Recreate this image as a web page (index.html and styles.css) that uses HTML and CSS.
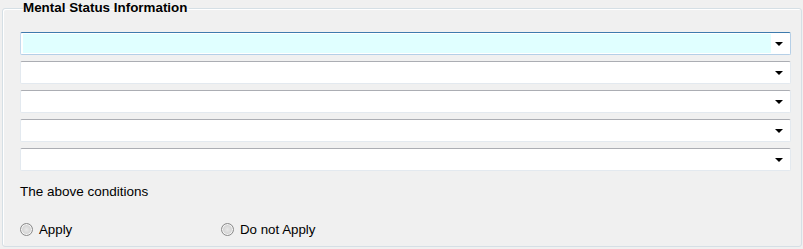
FILE: index.html
```html
<!DOCTYPE html>
<html>
<head>
<meta charset="utf-8">
<link rel="stylesheet" href="styles.css">
</head>
<body>
<fieldset class="group">
  <legend class="group-title">Mental Status Information</legend>
  <div class="combos">
    <div class="combo combo-focus"><span class="combo-field"></span><span class="combo-arrow"></span></div>
    <div class="combo"><span class="combo-field"></span><span class="combo-arrow"></span></div>
    <div class="combo"><span class="combo-field"></span><span class="combo-arrow"></span></div>
    <div class="combo"><span class="combo-field"></span><span class="combo-arrow"></span></div>
    <div class="combo"><span class="combo-field"></span><span class="combo-arrow"></span></div>
  </div>
  <div class="caption">The above conditions</div>
  <div class="radios">
    <label class="radio"><span class="radio-dot"></span><span class="radio-text">Apply</span></label>
    <label class="radio"><span class="radio-dot"></span><span class="radio-text">Do not Apply</span></label>
  </div>
</fieldset>
</body>
</html>
```
FILE: styles.css
```css
html, body {
  margin: 0;
  padding: 0;
  background: #f0f0f0;
}
body {
  width: 803px;
  height: 249px;
  overflow: hidden;
  font-family: "Liberation Sans", Arial, sans-serif;
  color: #000;
}
.group {
  box-sizing: border-box;
  margin: 0 1px 0 2px;
  width: 800px;
  height: 247px;
  border: 1px solid #d5dfe5;
  border-radius: 3px;
  box-shadow: inset 1px 1px 0 #fff;
  padding: 0 10px 0 17px;
  min-width: 0;
}
.group-title {
  font-weight: bold;
  font-size: 13.4px;
  line-height: 16px;
  padding: 0 2px 0 0;
  margin-left: 3px;
  color: #000;
}
.combos {
  display: flex;
  flex-direction: column;
  gap: 6px;
  margin-top: 16px;
}
.combo {
  box-sizing: border-box;
  height: 23px;
  width: 771px;
  display: flex;
  align-items: stretch;
  background: #fff;
  border: 1px solid #e3e9ef;
  border-top-color: #abadb3;
  border-radius: 2px;
}
.combo-field {
  flex: 1;
}
.combo-arrow {
  width: 19px;
  position: relative;
}
.combo-arrow::after {
  content: "";
  position: absolute;
  left: 4px;
  top: 9px;
  border-left: 4px solid transparent;
  border-right: 4px solid transparent;
  border-top: 4px solid #000;
}
.combo-focus {
  border-color: #c5daed;
  border-top-color: #3d7bad;
  border-right-color: #b5cfe7;
  border-bottom-color: #b5cfe7;
  padding: 1px 0 1px 2px;
}
.combo-focus .combo-field {
  background: #e0ffff;
}
.combo-focus .combo-arrow::after {
  top: 8px;
}
.caption {
  margin-top: 13px;
  font-size: 13.5px;
  line-height: 16px;
}
.radios {
  display: grid;
  grid-template-columns: 201px auto;
  margin-top: 22px;
}
.radio {
  display: flex;
  align-items: center;
  gap: 6px;
  font-size: 13.3px;
  line-height: 16px;
}
.radio-dot {
  box-sizing: border-box;
  width: 13px;
  height: 13px;
  border-radius: 50%;
  border: 1px solid #8a8a8a;
  background: radial-gradient(circle at 50% 50%, #e8e8e8 0, #d6d6d6 50%, #c4c4c4 100%);
  box-shadow: inset 0 0 0 1px #f6f6f6;
  margin-top: -1px;
}
```
